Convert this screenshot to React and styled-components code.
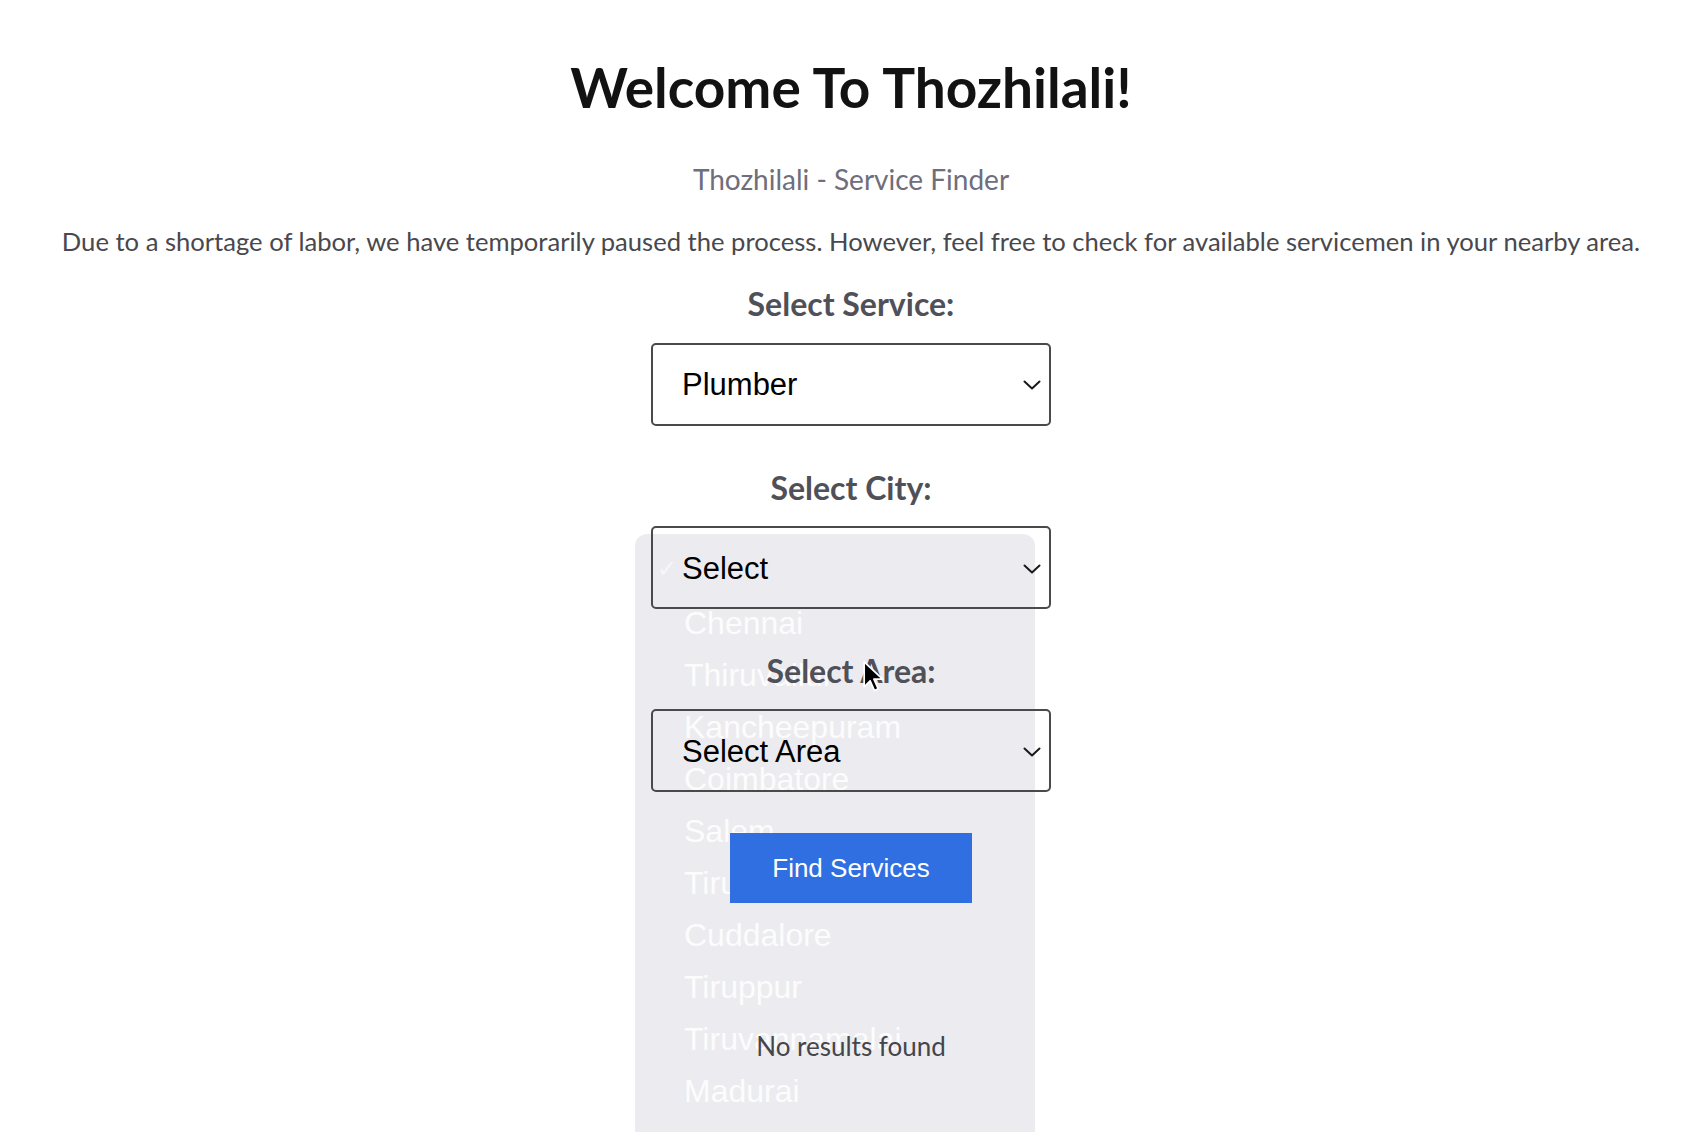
import React from "react";
import styled, { createGlobalStyle } from "styled-components";

const GlobalStyle = createGlobalStyle`
  html, body {
    margin: 0;
    padding: 0;
    background: #ffffff;
  }
  body {
    font-family: Lato, "Open Sans", sans-serif;
  }
`;

const Page = styled.div`
  position: relative;
  min-height: 1132px;
  overflow: hidden;
`;

const Main = styled.main`
  position: relative;
  z-index: 1;
  display: flex;
  flex-direction: column;
  align-items: center;
  padding: 54px 6px 0 0;
  text-align: center;
`;

const Title = styled.h1`
  margin: 0;
  font-family: Lato, sans-serif;
  font-size: 55px;
  font-weight: 700;
  line-height: 1.2;
  color: #121212;
`;

const Subtitle = styled.p`
  margin: 43px 0 0;
  font-size: 28px;
  line-height: 1.2;
  color: #6e6e7c;
`;

const Notice = styled.p`
  margin: 29px 0 0;
  font-size: 25.6px;
  line-height: 1.2;
  color: #48484e;
`;

const Form = styled.form`
  display: flex;
  flex-direction: column;
  align-items: center;
  gap: 43px;
  margin-top: 29px;
`;

const Field = styled.div`
  display: flex;
  flex-direction: column;
  align-items: center;
  gap: 19px;
`;

const Label = styled.label`
  font-size: 32px;
  font-weight: 700;
  line-height: 1.2;
  color: #505058;
`;

const SelectBox = styled.div`
  box-sizing: border-box;
  width: 400px;
  height: 83px;
  display: flex;
  align-items: center;
  justify-content: space-between;
  padding: 2px 8px 0 29px;
  border: 2px solid #4a4a4a;
  border-radius: 5px;
  background: transparent;
  font-family: "Liberation Sans", Arial, sans-serif;
  font-size: 31px;
  color: #000;
`;

const Chevron = () => (
  <svg width="18" height="10" viewBox="0 0 18 10" fill="none">
    <path d="M1.5 1.5 L9 8.5 L16.5 1.5" stroke="#1a1a1a" strokeWidth="2" strokeLinecap="round" strokeLinejoin="round" />
  </svg>
);

const Button = styled.button`
  width: 242px;
  height: 70px;
  margin-top: -2px;
  border: none;
  border-radius: 0;
  background: #2f6fe2;
  color: #ffffff;
  font-family: "Liberation Sans", Arial, sans-serif;
  font-size: 26px;
  cursor: pointer;
`;

const Empty = styled.p`
  margin: 128px 0 0;
  font-size: 26px;
  line-height: 1.2;
  color: #45454a;
`;

const Ghost = styled.ul`
  position: absolute;
  z-index: 0;
  left: calc(50% - 219px);
  top: 534px;
  width: 400px;
  bottom: -30px;
  margin: 0;
  padding: 11px 0 0;
  list-style: none;
  border-radius: 12px;
  background: #ececf0;
`;

const GhostItem = styled.li`
  position: relative;
  height: 52px;
  display: flex;
  align-items: center;
  padding-left: 49px;
  font-family: "Liberation Sans", Arial, sans-serif;
  font-size: 32px;
  color: rgba(255, 255, 255, 0.85);
`;

const Check = styled.span`
  position: absolute;
  left: 22px;
  top: 10px;
  font-size: 24px;
  color: rgba(255, 255, 255, 0.6);
`;

const Cursor = styled.svg`
  position: absolute;
  z-index: 2;
  left: 862px;
  top: 659px;
`;

const cities = [
  "Chennai",
  "Thiruvallur",
  "Kancheepuram",
  "Coimbatore",
  "Salem",
  "Tiruchirappalli",
  "Cuddalore",
  "Tiruppur",
  "Tiruvannamalai",
  "Madurai",
];

export default function App() {
  return (
    <Page>
      <GlobalStyle />
      <Ghost aria-hidden="true">
        <GhostItem>
          <Check>✓</Check>
        </GhostItem>
        {cities.map((c) => (
          <GhostItem key={c}>{c}</GhostItem>
        ))}
      </Ghost>
      <Main>
        <Title>Welcome To Thozhilali!</Title>
        <Subtitle>Thozhilali - Service Finder</Subtitle>
        <Notice>
          Due to a shortage of labor, we have temporarily paused the process. However, feel free to
          check for available servicemen in your nearby area.
        </Notice>
        <Form onSubmit={(e) => e.preventDefault()}>
          <Field>
            <Label>Select Service:</Label>
            <SelectBox>
              <span>Plumber</span>
              <Chevron />
            </SelectBox>
          </Field>
          <Field>
            <Label>Select City:</Label>
            <SelectBox>
              <span>Select</span>
              <Chevron />
            </SelectBox>
          </Field>
          <Field>
            <Label>Select Area:</Label>
            <SelectBox>
              <span>Select Area</span>
              <Chevron />
            </SelectBox>
          </Field>
          <Button type="submit">Find Services</Button>
        </Form>
        <Empty>No results found</Empty>
      </Main>
      <Cursor width="26" height="36" viewBox="0 0 24 32">
        <path
          d="M2 2 L2 25 L7.5 19.5 L11.5 28.5 L15 27 L11 18 L19 18 Z"
          fill="#000"
          stroke="#fff"
          strokeWidth="1.6"
          strokeLinejoin="round"
        />
      </Cursor>
    </Page>
  );
}
